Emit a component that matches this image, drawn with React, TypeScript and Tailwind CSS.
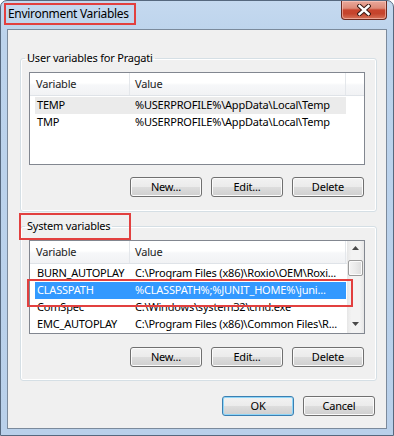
import React from "react";

type Row = { name: string; value: string; state?: "sel" | "soft" };

const Btn = ({ label, def = false }: { label: string; def?: boolean }) => (
  <div
    className={
      def
        ? "flex h-[20px] w-[72px] items-center justify-center rounded-[3px] border border-[#3c7fb1] bg-[linear-gradient(#f2f2f2_0%,#ebebeb_50%,#dddddd_50%,#cfcfcf_100%)] pb-[1px] text-[11px] leading-none text-black shadow-[inset_0_0_0_1px_#8fd6f8]"
        : "flex h-[20px] w-[72px] items-center justify-center rounded-[3px] border border-[#707070] bg-[linear-gradient(#f2f2f2_0%,#ebebeb_50%,#dddddd_50%,#cfcfcf_100%)] pb-[1px] text-[11px] leading-none text-black shadow-[inset_0_0_0_1px_#fbfbfb]"
    }
  >
    {label}
  </div>
);

const ListRow = ({ r }: { r: Row }) => (
  <div
    className={
      r.state === "sel"
        ? "ml-[5px] flex h-[17px] w-[311px] shrink-0 items-center bg-[#3399ff] text-white"
        : r.state === "soft"
        ? "ml-[5px] flex h-[17px] w-[311px] shrink-0 items-center bg-[#ebebeb] text-black"
        : "ml-[5px] flex h-[17px] w-[311px] shrink-0 items-center text-black"
    }
  >
    <div className="w-[95px] shrink-0 overflow-hidden whitespace-nowrap pl-[2px]">{r.name}</div>
    <div className="flex-1 overflow-hidden whitespace-nowrap pl-[5px]">{r.value}</div>
  </div>
);

const Header = () => (
  <div className="flex h-[23px] shrink-0 border-b border-[#dfe3e8] bg-[linear-gradient(#ffffff_0%,#ffffff_45%,#f6f7f9_55%,#f1f2f4_100%)] text-[#222]">
    <div className="flex w-[100px] shrink-0 items-center border-r border-[#e4e7eb] pl-[6px]">Variable</div>
    <div className="flex w-[216px] shrink-0 items-center border-r border-[#e4e7eb] pl-[5px]">Value</div>
    <div className="flex-1" />
  </div>
);

const Arrow = ({ up }: { up: boolean }) => (
  <svg width="7" height="4" viewBox="0 0 7 4">
    {up ? <path d="M0 4 L3.5 0 L7 4 Z" fill="#4a4a4a" /> : <path d="M0 0 L3.5 4 L7 0 Z" fill="#4a4a4a" />}
  </svg>
);

const Scrollbar = () => (
  <div className="flex w-[17px] shrink-0 flex-col bg-[linear-gradient(90deg,#e6e6e6_0%,#f3f3f3_25%,#f3f3f3_75%,#e6e6e6_100%)]">
    <div className="flex h-[17px] shrink-0 items-center justify-center pb-[4px]">
      <Arrow up />
    </div>
    <div className="mx-[1px] mt-[2px] h-[16px] shrink-0 rounded-[2px] border border-[#9b9b9b] bg-[linear-gradient(90deg,#f4f4f4_0%,#eaeaea_50%,#dcdcdc_100%)] shadow-[inset_0_0_0_1px_#fbfbfb]" />
    <div className="flex-1" />
    <div className="flex h-[17px] shrink-0 items-center justify-center pb-[2px]">
      <Arrow up={false} />
    </div>
  </div>
);

const userRows: Row[] = [
  { name: "TEMP", value: "%USERPROFILE%\\AppData\\Local\\Temp", state: "soft" },
  { name: "TMP", value: "%USERPROFILE%\\AppData\\Local\\Temp" },
];

const sysRows: Row[] = [
  { name: "BURN_AUTOPLAY", value: "C:\\Program Files (x86)\\Roxio\\OEM\\Roxi..." },
  { name: "CLASSPATH", value: "%CLASSPATH%;%JUNIT_HOME%\\juni...", state: "sel" },
  { name: "ComSpec", value: "C:\\Windows\\system32\\cmd.exe" },
  { name: "EMC_AUTOPLAY", value: "C:\\Program Files (x86)\\Common Files\\R..." },
];

const Group = ({ title, children, first }: { title: string; children: React.ReactNode; first?: boolean }) => (
  <fieldset
    className={
      first
        ? "ml-[12px] mt-[21px] w-[357px] rounded-[3px] border border-[#d5dfe5] px-[8px] pb-[14px] pt-[7px] shadow-[inset_0_0_0_1px_#ffffff]"
        : "ml-[12px] mt-[7px] w-[357px] rounded-[3px] border border-[#d5dfe5] px-[8px] pb-[13px] pt-[7px] shadow-[inset_0_0_0_1px_#ffffff]"
    }
  >
    <legend className="ml-[-4px] px-[2px] text-[11px] leading-[14px] text-black">{title}</legend>
    {children}
  </fieldset>
);

const CloseButton = () => (
  <div className="mr-[6px] flex h-[19px] w-[46px] items-center justify-center rounded-b-[4px] border border-t-0 border-[#6b2a20] bg-[linear-gradient(#e9a99b_0%,#dd8a78_40%,#c8452e_50%,#c5442c_70%,#d6735a_100%)] shadow-[inset_0_0_0_1px_rgba(255,210,200,0.55)]">
    <svg width="14" height="12" viewBox="0 0 14 12">
      <path d="M2.5 2 L11.5 10 M11.5 2 L2.5 10" stroke="#3b1a14" strokeWidth="4.4" strokeLinecap="square" />
      <path d="M2.5 2 L11.5 10 M11.5 2 L2.5 10" stroke="#ffffff" strokeWidth="2.4" strokeLinecap="square" />
    </svg>
  </div>
);

export default function App() {
  return (
    <div className="relative flex h-[436px] w-[394px] flex-col overflow-hidden rounded-t-[7px] border border-[#56687e] bg-[linear-gradient(#c5d9ef_0%,#bcd3ec_8%,#b9d0ea_100%)] font-['Noto_Sans',sans-serif] text-[11px] tracking-[-0.2px] text-black">
      {/* title bar */}
      <div className="flex h-[28px] shrink-0 items-start justify-between">
        <div className="pl-[7px] pt-[5px] text-[12px] leading-[16px] tracking-[-0.3px] text-black">Environment Variables</div>
        <CloseButton />
      </div>

      {/* client area */}
      <div className="mx-[6px] flex h-[400px] shrink-0 flex-col border border-[#7b8a9c] bg-[#f0f0f0]">
        <Group title="User variables for Pragati" first>
          <div className="flex h-[93px] w-[336px] flex-col overflow-hidden border border-[#828790] bg-white">
            <Header />
            <div className="mt-[1px] flex flex-col">
              {userRows.map((r) => (
                <ListRow key={r.name} r={r} />
              ))}
            </div>
          </div>
          <div className="mt-[12px] flex w-[336px] justify-end gap-[9px] pr-[1px]">
            <Btn label="New..." />
            <Btn label="Edit..." />
            <Btn label="Delete" />
          </div>
        </Group>

        <Group title="System variables">
          <div className="flex h-[94px] w-[336px] overflow-hidden border border-[#828790] bg-white">
            <div className="flex flex-1 flex-col overflow-hidden">
              <Header />
              <div className="mt-[1px] flex flex-col">
                {sysRows.map((r) => (
                  <ListRow key={r.name} r={r} />
                ))}
              </div>
            </div>
            <Scrollbar />
          </div>
          <div className="mt-[13px] flex w-[336px] justify-end gap-[9px] pr-[1px]">
            <Btn label="New..." />
            <Btn label="Edit..." />
            <Btn label="Delete" />
          </div>
        </Group>

        <div className="mt-[15px] flex justify-end gap-[9px] pr-[11px]">
          <Btn label="OK" def />
          <Btn label="Cancel" />
        </div>
      </div>

      {/* annotations */}
      <div className="pointer-events-none absolute left-[3px] top-[2px] h-[22px] w-[132px] border-2 border-[#e2403f]" />
      <div className="pointer-events-none absolute left-[18px] top-[212px] h-[27px] w-[112px] border-2 border-[#e2403f]" />
      <div className="pointer-events-none absolute left-[26px] top-[278px] h-[28px] w-[326px] border-2 border-[#e2403f]" />
    </div>
  );
}
